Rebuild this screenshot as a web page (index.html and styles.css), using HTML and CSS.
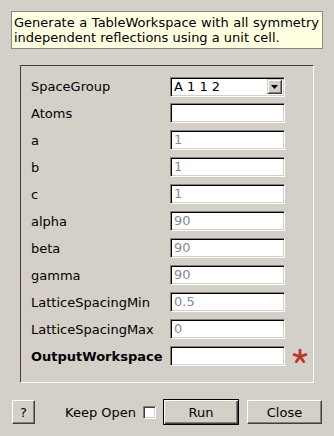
FILE: index.html
```html
<html>
    <head>
        <link rel="stylesheet" href="styles.css">
    </head>
    <body>
        <div class = "dialog">
            <div class = "description">Generate a TableWorkspace with all symmetry independent reflections using a unit cell.</div>
            <div class = "frame">
                <div class = "props">
                    <span class = "label">SpaceGroup</span>
                    <div class = "combo">
                        <span class = "combo-text">A 1 1 2</span>
                        <span class = "combo-button">
                            <svg width = "7" height = "4" viewBox = "0 0 7 4"><path d = "M0 0h7L3.5 4z" fill = "#000"/></svg>
                        </span>
                    </div>
                    <span></span>

                    <span class = "label">Atoms</span>
                    <div class = "field"></div>
                    <span></span>

                    <span class = "label">a</span>
                    <div class = "field">1</div>
                    <span></span>

                    <span class = "label">b</span>
                    <div class = "field">1</div>
                    <span></span>

                    <span class = "label">c</span>
                    <div class = "field">1</div>
                    <span></span>

                    <span class = "label">alpha</span>
                    <div class = "field">90</div>
                    <span></span>

                    <span class = "label">beta</span>
                    <div class = "field">90</div>
                    <span></span>

                    <span class = "label">gamma</span>
                    <div class = "field">90</div>
                    <span></span>

                    <span class = "label">LatticeSpacingMin</span>
                    <div class = "field">0.5</div>
                    <span></span>

                    <span class = "label">LatticeSpacingMax</span>
                    <div class = "field">0</div>
                    <span></span>

                    <span class = "label bold">OutputWorkspace</span>
                    <div class = "field"></div>
                    <span class = "required">
                        <svg width = "16" height = "16" viewBox = "0 0 16 16">
                            <g stroke = "#b8382b" stroke-width = "2.8" stroke-linecap = "round">
                                <line x1 = "8" y1 = "8.5" x2 = "8" y2 = "2.2"/>
                                <line x1 = "8" y1 = "8.5" x2 = "13.9" y2 = "6.6"/>
                                <line x1 = "8" y1 = "8.5" x2 = "2.1" y2 = "6.6"/>
                                <line x1 = "8" y1 = "8.5" x2 = "11.7" y2 = "13.6"/>
                                <line x1 = "8" y1 = "8.5" x2 = "4.3" y2 = "13.6"/>
                            </g>
                        </svg>
                    </span>
                </div>
            </div>
            <div class = "buttons">
                <div class = "button help">?</div>
                <div class = "spacer"></div>
                <span class = "keep">Keep Open</span>
                <div class = "checkbox"></div>
                <div class = "button default">Run</div>
                <div class = "button close">Close</div>
            </div>
        </div>
    </body>
</html>
```

FILE: styles.css
```css
body{
    margin: 0;
    background-color: #d4d0c8;
    font-family: "DejaVu Sans", sans-serif;
    font-size: 13px;
    color: #000;
}
.dialog{
    width: 334px;
    height: 436px;
    overflow: hidden;
}
.description{
    margin: 11px 11px 0 11px;
    padding: 3px 3px 3px 2px;
    background-color: #ffffe1;
    border: 1px solid #8a8884;
    line-height: 15px;
    text-align: justify;
}
.frame{
    margin: 16px 20px 0 20px;
    padding: 10px 0 16px 10px;
    border-top: 1px solid #404040;
    border-left: 1px solid #404040;
    border-bottom: 1px solid #fff;
    border-right: 1px solid #fff;
}
.props{
    display: grid;
    grid-template-columns: 139px 115px auto;
    grid-auto-rows: 20px;
    row-gap: 7px;
    align-items: center;
}
.label{
    white-space: nowrap;
}
.bold{
    font-weight: bold;
}
.field, .combo{
    box-sizing: border-box;
    height: 20px;
    background-color: #fff;
    border-top: 1px solid #808080;
    border-left: 1px solid #808080;
    border-bottom: 1px solid #fff;
    border-right: 1px solid #fff;
    box-shadow: inset 1px 1px #000, inset -1px -1px #d4d0c8;
    padding: 0 3px;
    line-height: 18px;
    color: #8a8a8a;
}
.combo{
    display: flex;
    align-items: center;
    margin-bottom: -1px;
    padding: 0 2px 0 3px;
    color: #000;
}
.combo-text{
    flex: 1;
}
.combo-button{
    box-sizing: border-box;
    width: 15px;
    height: 15px;
    display: flex;
    justify-content: center;
    align-items: center;
    background-color: #d4d0c8;
    border-top: 1px solid #d4d0c8;
    border-left: 1px solid #d4d0c8;
    border-bottom: 1px solid #404040;
    border-right: 1px solid #404040;
    box-shadow: inset 1px 1px #fff, inset -1px -1px #808080;
}
.required{
    display: flex;
    align-items: center;
    margin-left: 7px;
}
.buttons{
    display: flex;
    align-items: center;
    height: 26px;
    margin: 16px 12px 0 12px;
}
.spacer{
    flex: 1;
}
.keep{
    margin-right: 1px;
}
.button{
    box-sizing: border-box;
    height: 24px;
    display: flex;
    justify-content: center;
    align-items: center;
    background-color: #d4d0c8;
    border-top: 1px solid #fff;
    border-left: 1px solid #fff;
    border-bottom: 1px solid #404040;
    border-right: 1px solid #404040;
    box-shadow: inset -1px -1px #808080;
}
.help{
    width: 23px;
}
.default{
    width: 76px;
    height: 26px;
    margin-left: 7px;
    border: 1px solid #000;
    box-shadow: inset 1px 1px #fff, inset -1px -1px #404040, inset -2px -2px #808080;
}
.close{
    width: 75px;
    margin-left: 8px;
}
.checkbox{
    box-sizing: border-box;
    width: 13px;
    height: 13px;
    margin-left: 6px;
    background-color: #fff;
    border-top: 1px solid #808080;
    border-left: 1px solid #808080;
    border-bottom: 1px solid #fff;
    border-right: 1px solid #fff;
    box-shadow: inset 1px 1px #404040, inset -1px -1px #d4d0c8;
}
```
